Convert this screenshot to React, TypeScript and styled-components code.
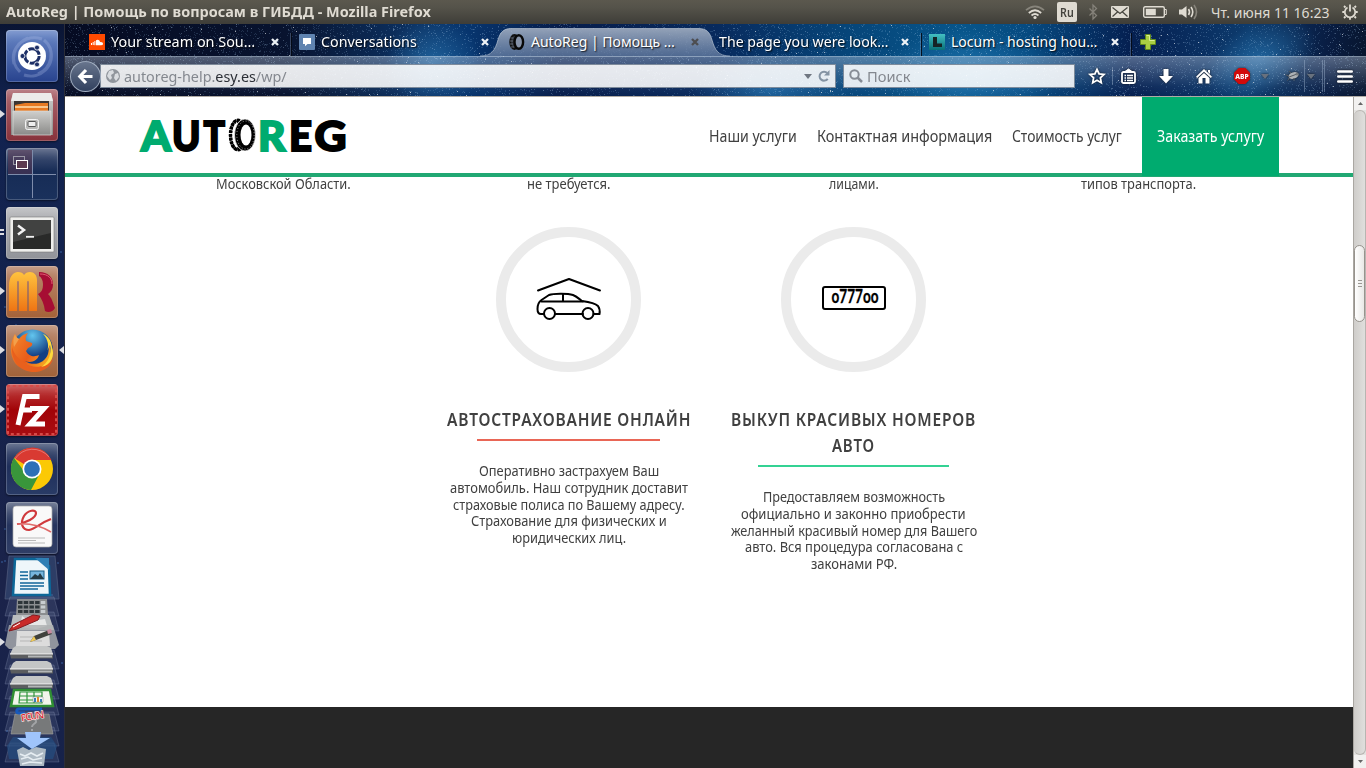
import React, { useLayoutEffect, useRef, useState } from 'react';
import styled, { createGlobalStyle } from 'styled-components';

const GlobalStyle = createGlobalStyle`
  *, *::before, *::after { box-sizing: border-box; }
  body { margin: 0; overflow: hidden; }
  svg { display: block; flex: none; overflow: visible; }
`;

const uiFont = '"Noto Sans", "Open Sans", sans-serif';

/* ---------- text fitted to a given width ---------- */

const FitBox = styled.span<{ $w: number }>`
  display: inline-block;
  flex: none;
  width: ${p => p.$w}px;
  white-space: nowrap;
  vertical-align: top;
  text-align: left;
`;
const FitInner = styled.span`
  display: inline-block;
  white-space: pre;
  transform-origin: 0 50%;
`;

function Fit({ w, children }: { w: number; children: React.ReactNode }) {
  const ref = useRef<HTMLSpanElement>(null);
  const [scale, setScale] = useState(1);
  useLayoutEffect(() => {
    if (ref.current) setScale(w / ref.current.offsetWidth);
  }, [w]);
  return (
    <FitBox $w={w}>
      <FitInner ref={ref} style={{ transform: `scaleX(${scale})` }}>{children}</FitInner>
    </FitBox>
  );
}

/* ---------- desktop frame ---------- */

const Desktop = styled.div`
  display: flex;
  flex-direction: column;
  width: 1366px;
  height: 768px;
  overflow: hidden;
  font-family: ${uiFont};
  background: #101d42;
`;
const TopPanel = styled.header`
  display: flex;
  align-items: center;
  height: 24px;
  flex: none;
  padding: 0 8px 0 6px;
  color: #dfdbd2;
  background: linear-gradient(#5b584e 0, #55534a 30%, #3e3d38 100%);
`;
const PanelTitle = styled.div`
  font-size: 14px;
  font-weight: 700;
  line-height: 24px;
  flex: 1;
`;
const Indicator = styled.div<{ $gap: number }>`
  margin-left: ${p => p.$gap}px;
  font-size: 14px;
  line-height: 23px;
`;
const LangBadge = styled.div`
  width: 20px;
  height: 20px;
  border-radius: 2px;
  background: #dfdbd2;
  color: #45443e;
  font-size: 13px;
  font-weight: 600;
  line-height: 21px;
  padding-left: 3px;
`;
const Body = styled.div`
  display: flex;
  flex: 1;
  min-height: 0;
`;

/* ---------- launcher ---------- */

const LauncherBar = styled.nav`
  position: relative;
  width: 65px;
  flex: none;
  padding-top: 6px;
  border-right: 1px solid #2b2d38;
  background: linear-gradient(#0a1534 0, #122350 12%, #14224c 45%, #1b234a 75%, #16224a 100%);
`;
const LauncherSlot = styled.div`
  position: relative;
  height: 52px;
  margin: 0 0 7px 6px;
`;
const Tile = styled.div<{ $bg: string }>`
  width: 52px;
  height: 52px;
  border-radius: 4px;
  background: ${p => p.$bg};
  box-shadow: inset 0 0 0 1px rgba(255, 255, 255, 0.2), inset 0 10px 10px -6px rgba(255, 255, 255, 0.22), 0 1px 2px rgba(0, 0, 0, 0.5);
`;
const Pip = styled.i<{ $top: number; $right?: boolean }>`
  position: absolute;
  top: ${p => p.$top}px;
  ${p => (p.$right ? 'right: 0;' : 'left: -6px;')}
  border: solid transparent;
  border-width: 4px 5px;
  ${p => (p.$right ? 'border-left: 0; border-right-color: #dcdde2;' : 'border-right: 0; border-left-color: #dcdde2;')}
`;
const SmallPip = styled.i<{ $top: number }>`
  position: absolute;
  top: ${p => p.$top}px;
  left: -6px;
  width: 4px;
  height: 2px;
  background: #dcdde2;
`;
const FoldedStack = styled.div`
  position: relative;
  margin-top: -7px;
  height: 213px;
`;
const StarLayer = styled.svg`
  position: absolute;
  left: 0;
  top: 0;
`;

/* ---------- browser ---------- */

const Browser = styled.div`
  display: flex;
  flex-direction: column;
  flex: 1;
  min-width: 0;
`;
const Chrome = styled.div`
  position: relative;
  height: 73px;
  flex: none;
  overflow: hidden;
  border-bottom: 1px solid #b0aba4;
  background: linear-gradient(90deg, #050b22 0, #08132f 17%, #0c3263 27%, #07356e 31%, #071d4b 38%, #082a5d 50%, #064579 60%, #07558a 69%, #064a80 74%, #051f50 82%, #0d3b6d 91%, #091d43 97%, #08162f 100%);
`;
const TabStrip = styled.div`
  position: relative;
  display: flex;
  height: 32px;
  padding-left: 15px;
`;
const TabItem = styled.div<{ $sep?: boolean }>`
  position: relative;
  display: flex;
  align-items: center;
  width: 210px;
  height: 32px;
  padding: 4px 0 0 9px;
  gap: 6px;
  font-size: 14px;
  line-height: 24px;
  color: #fff;
  text-shadow: 1px 1px 1.5px rgba(0, 0, 0, 0.9);
  ${p => p.$sep && `
    &::after {
      content: '';
      position: absolute;
      right: -2px;
      top: 9px;
      width: 2px;
      height: 23px;
      background: linear-gradient(90deg, rgba(140, 160, 190, 0.35) 50%, rgba(4, 8, 18, 0.9) 50%);
    }
  `}
`;
const TabIcon = styled.div`
  position: relative;
`;
const TabLabel = styled.div`
  position: relative;
  flex: 1;
`;
const CloseSlot = styled.div`
  position: relative;
  margin-right: 11px;
`;
const ActiveShape = styled.svg`
  position: absolute;
  left: -20px;
  top: 4px;
`;
const NewTab = styled.div`
  padding: 10px 0 0 10px;
`;
const NavBar = styled.div`
  position: relative;
  display: flex;
  align-items: center;
  height: 40px;
  padding: 0 0 1px 5px;
  border-top: 1px solid rgba(205, 220, 235, 0.6);
  background: linear-gradient(rgba(190, 205, 225, 0.42), rgba(150, 170, 200, 0.08) 75%, rgba(120, 140, 170, 0));
`;
const BackButton = styled.div`
  position: relative;
  z-index: 1;
  display: grid;
  place-items: center;
  width: 31px;
  height: 31px;
  margin-right: -1px;
  border-radius: 50%;
  border: 1px solid rgba(185, 197, 214, 0.75);
  background: linear-gradient(#68758d, #31405e);
`;
const Field = styled.div<{ $w: number; $ml: number }>`
  display: flex;
  align-items: center;
  width: ${p => p.$w}px;
  height: 24px;
  margin-left: ${p => p.$ml}px;
  padding: 0 5px;
  border: 1px solid rgba(90, 105, 125, 0.75);
  background: rgba(255, 255, 255, 0.88);
  font-size: 14px;
  line-height: 22px;
  color: #84888f;
`;
const FieldText = styled.div`
  margin: 1px 0 0 4px;
`;
const Dark = styled.span`
  color: #2c3037;
`;
const FieldEnd = styled.div`
  display: flex;
  align-items: center;
  gap: 6px;
  margin-left: auto;
`;
const Tool = styled.div<{ $ml: number }>`
  margin-left: ${p => p.$ml}px;
  filter: drop-shadow(0 0 1px rgba(0, 0, 0, 0.7));
`;
const Divider = styled.div<{ $ml: number; $h: number }>`
  width: 1px;
  height: ${p => p.$h}px;
  margin-left: ${p => p.$ml}px;
  background: rgba(170, 190, 215, 0.4);
`;

/* ---------- page ---------- */

const Viewport = styled.div`
  display: flex;
  flex: 1;
  min-height: 0;
  background: #fff;
`;
const Page = styled.div`
  display: flex;
  flex-direction: column;
  width: 1288px;
`;
const SiteHeader = styled.header`
  display: flex;
  align-items: center;
  height: 80px;
  padding: 0 74px 0 75px;
  border-bottom: 4px solid #21a873;
  font-size: 15.6px;
  line-height: 26px;
  color: #404040;
`;
const SiteNav = styled.nav`
  display: flex;
  align-items: center;
  gap: 20px;
  height: 76px;
  margin-left: auto;
  padding-top: 2px;
`;
const OrderButton = styled.div`
  display: flex;
  align-items: center;
  height: 79px;
  margin: -2px 0 -3px;
  padding: 0 15px 1px;
  background: #00ab6f;
  color: #fff;
`;
const Main = styled.main`
  height: 530px;
  font-size: 13.8px;
  line-height: 16.8px;
  color: #404040;
`;
const UpperRow = styled.div`
  display: grid;
  grid-template-columns: repeat(4, 285px);
  height: 51px;
  padding-left: 76px;
  margin-top: -1px;
  text-align: center;
`;
const ServiceRow = styled.section`
  display: flex;
  padding-left: 361px;
`;
const Service = styled.article`
  display: flex;
  flex-direction: column;
  align-items: center;
  width: 285px;
`;
const Ring = styled.div<{ $lift: number }>`
  display: grid;
  place-items: center;
  width: 145px;
  height: 145px;
  padding-bottom: ${p => p.$lift}px;
  border: 10px solid #ebebeb;
  border-radius: 50%;
`;
const ServiceTitle = styled.h3`
  display: flex;
  flex-direction: column;
  align-items: center;
  margin: 34px 0 0;
  font-size: 17.4px;
  font-weight: 600;
  letter-spacing: 0.9px;
  line-height: 26px;
`;
const Rule = styled.div<{ $w: number; $color: string }>`
  width: ${p => p.$w}px;
  height: 2px;
  margin: 7px 0 22px;
  background: ${p => p.$color};
`;
const Line = styled.div`
  height: 16.8px;
`;
const SiteFooter = styled.footer`
  flex: 1;
  background: #262626;
`;

const Scrollbar = styled.div`
  display: flex;
  flex-direction: column;
  width: 13px;
  background: #e4e3e1;
  border-left: 1px solid #aaa7a2;
`;
const ScrollButton = styled.div`
  display: grid;
  place-items: center;
  height: 13px;
  background: #f2f1f0;
`;
const Track = styled.div`
  flex: 1;
  padding-top: 134px;
  border: 1px solid #b8b5b1;
  border-left: 0;
  border-radius: 6px;
  background: linear-gradient(90deg, #cfcdca, #e0dfdd);
`;
const Thumb = styled.div`
  display: flex;
  flex-direction: column;
  align-items: center;
  justify-content: center;
  gap: 2px;
  height: 77px;
  border: 1px solid #97938d;
  border-radius: 6px;
  background: linear-gradient(90deg, #fff, #e9e8e6);
`;
const Grip = styled.i`
  width: 4px;
  height: 1px;
  background: #9b9893;
`;

/* ---------- star field ---------- */

function makeStars(count: number, w: number, h: number, seed: number, size = 1) {
  let s = seed;
  const next = () => {
    s = (s + 0x6d2b79f5) | 0;
    let t = Math.imul(s ^ (s >>> 15), 1 | s);
    t = (t + Math.imul(t ^ (t >>> 7), 61 | t)) ^ t;
    return ((t ^ (t >>> 14)) >>> 0) / 4294967296;
  };
  let d = '';
  for (let i = 0; i < count; i++) {
    d += `M${Math.floor(next() * w)} ${Math.floor(next() * h)}h${size}v${size}h-${size}z`;
  }
  return d;
}
const faintStars = makeStars(7500, 1301, 73, 7);
const midStars = makeStars(1700, 1301, 73, 41);
const brightStars = makeStars(200, 1301, 73, 93);
const launcherStars = makeStars(26, 64, 744, 15, 2);

const ChromeStars = () => (
  <StarLayer width="1301" height="73">
    <defs>
      <radialGradient id="glow">
        <stop offset="0" stopColor="#2f86c4" stopOpacity="0.55" />
        <stop offset="1" stopColor="#2f86c4" stopOpacity="0" />
      </radialGradient>
    </defs>
    <ellipse cx="368" cy="38" rx="48" ry="45" fill="url(#glow)" />
    <ellipse cx="705" cy="66" rx="80" ry="35" fill="url(#glow)" />
    <ellipse cx="905" cy="50" rx="90" ry="45" fill="url(#glow)" />
    <ellipse cx="1195" cy="35" rx="60" ry="35" fill="url(#glow)" transform="rotate(-25 1195 35)" />
    <path d={faintStars} fill="#8fb8e0" opacity="0.19" />
    <path d={midStars} fill="#b8d4ef" opacity="0.3" />
    <path d={brightStars} fill="#fff" opacity="0.6" />
  </StarLayer>
);

/* ---------- small icons ---------- */

const Cross = ({ dark }: { dark?: boolean }) => (
  <svg width="8" height="8" viewBox="0 0 8 8">
    <path d="M1 1l6 6M7 1l-6 6" stroke={dark ? '#4d4d50' : '#eef2f6'} strokeWidth="2.3" />
  </svg>
);
const SoundCloud = () => (
  <svg width="16" height="16" viewBox="0 0 16 16">
    <rect width="16" height="16" fill="#ff4a00" />
    <path d="M2.500 9v2M4.200 8v3M5.900 7v4.200" stroke="#fff" strokeWidth="1" />
    <path d="M7 11.200V6.200c2-1.400 4 0 4 2 1.600-.5 3 .4 3 1.600s-1 1.400-1.600 1.400z" fill="#fff" />
  </svg>
);
const ChatIcon = () => (
  <svg width="16" height="16" viewBox="0 0 16 16">
    <rect width="16" height="16" rx="1" fill="#5f83b0" />
    <path d="M4 4h8v6H8.500L6 12.300V10H4z" fill="#fff" />
  </svg>
);
const TireIcon = () => (
  <svg width="16" height="16" viewBox="0 0 16 16">
    <ellipse cx="5.500" cy="8" rx="4.300" ry="7" fill="#30343b" stroke="#111" strokeWidth="1.800" />
    <path d="M1.500 4h3M1 7h3M1 10h3M2 13h3" stroke="#8a94a6" strokeWidth=".6" />
    <ellipse cx="9.800" cy="8" rx="4.300" ry="6.800" fill="#8693a9" stroke="#080808" strokeWidth="2.400" />
  </svg>
);
const LocumIcon = () => (
  <svg width="16" height="16" viewBox="0 0 16 16">
    <defs>
      <linearGradient id="locum" x2="0" y2="1"><stop stopColor="#43bfc2" /><stop offset="1" stopColor="#087078" /></linearGradient>
    </defs>
    <rect width="16" height="16" fill="url(#locum)" />
    <path d="M4 3h4v6.500h5v3.500H4z" fill="#152326" />
  </svg>
);
const PlusIcon = () => (
  <svg width="16" height="16" viewBox="0 0 16 16">
    <path d="M5.500.5h5v5h5v5h-5v5h-5v-5h-5v-5h5z" fill="#a9cf43" stroke="#628b1d" />
    <path d="M6.500 1.500h3v5h5" fill="none" stroke="#d8ee8f" />
  </svg>
);

/* ---------- launcher drawings ---------- */

const DashIcon = () => (
  <svg width="52" height="52" viewBox="0 0 52 52">
    <g fill="none" stroke="#b6c7ee" opacity="0.28" strokeWidth="3">
      <path d="M8 34C4 16 20 4 36 9M44 18c6 18-10 32-26 27M14 42C2 30 8 14 22 8M38 10c12 10 8 28-6 34" />
    </g>
    <circle cx="26" cy="26" r="14" fill="#fff" />
    <circle cx="26" cy="26" r="7.200" fill="none" stroke="#1d2f66" strokeWidth="3" strokeDasharray="13.500 1.580" />
    <g fill="#1d2f66" stroke="#fff" strokeWidth="0.8">
      <circle cx="16.500" cy="26" r="2.500" /><circle cx="31" cy="17.600" r="2.500" /><circle cx="31" cy="34.400" r="2.500" />
    </g>
  </svg>
);
const FilesIcon = () => (
  <svg width="52" height="52" viewBox="0 0 52 52">
    <defs><linearGradient id="cab" x2="0" y2="1"><stop stopColor="#cfcfcd" /><stop offset="1" stopColor="#8a8a88" /></linearGradient></defs>
    <path d="M7 4h38l2 8v34H5V12z" fill="url(#cab)" />
    <path d="M7 4h38l2 8H5z" fill="#ececeb" />
    <rect x="8" y="12" width="35" height="10" fill="#3b3532" />
    <path d="M9 16l10-2h23v8H9z" fill="#e77a23" />
    <path d="M9 18h33" stroke="#ffe1b0" strokeWidth="1.500" />
    <path d="M7 22h38v24H7z" fill="url(#cab)" stroke="#dcdcda" strokeWidth=".7" />
    <rect x="19.500" y="30.500" width="13" height="10" rx="2" fill="#b9b9b7" stroke="#f3f3f3" />
    <rect x="22" y="32.500" width="8" height="5" rx="1" fill="#eee" stroke="#555" />
  </svg>
);
const WorkspacesIcon = () => (
  <svg width="52" height="52" viewBox="0 0 52 52">
    <rect x="2" y="2" width="24" height="24" fill="#5c3550" opacity=".5" />
    <path d="M26.500 2v48M2 26.500h48" stroke="#7e8cab" />
    <rect x="7.500" y="8.500" width="11" height="8" fill="none" stroke="#9b98a6" />
    <rect x="10.500" y="12.500" width="11" height="8" fill="#5c3a50" stroke="#fff" />
  </svg>
);
const TerminalIcon = () => (
  <svg width="52" height="52" viewBox="0 0 52 52">
    <rect x="4" y="10" width="44" height="35" rx="1" fill="#efefed" stroke="#777" strokeWidth=".6" />
    <rect x="7" y="13" width="38" height="29" fill="#292a29" />
    <path d="M7 13h38v13L7 35z" fill="#555" opacity=".55" />
    <path d="M12 18.500l6 4.500-6 4.500" fill="none" stroke="#f2f2f2" strokeWidth="2.500" />
    <path d="M20 29.800h8" stroke="#f2f2f2" strokeWidth="1.800" />
  </svg>
);
const MineIcon = () => (
  <svg width="52" height="52" viewBox="0 0 52 52">
    <defs><linearGradient id="orange" x2="0" y2="1"><stop stopColor="#ffc33e" /><stop offset="1" stopColor="#ee7414" /></linearGradient></defs>
    <path d="M3 45V20C3 11 7 6 12 6c3 0 5 1 6 3C19.500 7 21 6 24 6c4 0 7 3 7 8v31h-8V17c0-3-2-3-2 0v28h-8V17c0-3-2-3-2 0v28z" fill="url(#orange)" />
    <path d="M33 6c9 0 14 5 14 12 0 5-2 8-5 10 4 4 5 9 7 14-2 4-7 5-10 3-1-7-3-12-7-17 4-2 5-5 5-10 0-4-2-7-4-8z" fill="#a60d33" />
    <path d="M34 8c8 0 12 4 12 10" fill="none" stroke="#df5870" strokeWidth="1" />
  </svg>
);
const FirefoxIcon = () => (
  <svg width="52" height="52" viewBox="0 0 52 52">
    <defs>
      <radialGradient id="globe" cx=".5" cy=".15"><stop stopColor="#62c5ee" /><stop offset="1" stopColor="#123f84" /></radialGradient>
      <linearGradient id="fox" x1="0" x2="1" y1="0" y2=".6"><stop stopColor="#f48a2c" /><stop offset=".6" stopColor="#e85c1a" /><stop offset="1" stopColor="#f7a51f" /></linearGradient>
    </defs>
    <circle cx="26.500" cy="25" r="20.500" fill="url(#globe)" />
    <path d="M9 9c1 3 2 4 4 5 2-3 5-5 9-6-2 3-3 5-2 8l6 2c1 2-1 4-4 5l-2 3c3 6 9 6 13 4-2 7-9 8-14 6 9 6 20 2 23-7 1-4 1-8 0-12 4 8 3 18-3 23-9 8-23 7-30-2C3 29 4 17 9 9z" fill="url(#fox)" />
    <path d="M6 22c-1 15 10 26 24 25 9-1 15-6 17-13-8 9-20 10-28 4C13 34 8 30 6 22z" fill="#e8601d" />
    <path d="M37 9c5 5 7 13 3 19l4-8c2 9-2 18-9 22 11-2 14-12 11-20C45 15 42 11 37 9z" fill="#ffd93c" />
    <path d="M9 9c1 3 2 4 4 5l-5 8c-1-4-1-9 1-13z" fill="#f3a04a" />
  </svg>
);
const FileZillaIcon = () => (
  <svg width="52" height="52" viewBox="0 0 52 52">
    <rect x="2" y="2" width="48" height="48" fill="none" stroke="#d64a48" strokeWidth="2" strokeDasharray="3 2.800" strokeDashoffset="1" />
    <path d="M12 41l6.500-28.500h15M15 26h11M24 24.500h14L24 40h15" fill="none" stroke="#fff" strokeWidth="5" />
  </svg>
);
const ChromeIcon = () => (
  <svg width="52" height="52" viewBox="0 0 52 52">
    <circle cx="26" cy="26" r="21" fill="#fbc905" />
    <path d="M26 26L8 15A21 21 0 0 1 45.500 17H26z" fill="#d93a32" />
    <path d="M8 15A21 21 0 0 0 25 47l9-17-8-4-8 2z" fill="#39963b" />
    <circle cx="26" cy="26" r="9.500" fill="#fff" />
    <circle cx="26" cy="26" r="7.800" fill="#2d70b7" />
    <path d="M9 16A21 21 0 0 1 43 14" fill="none" stroke="#fff" opacity=".3" />
  </svg>
);
const DocumentIcon = () => (
  <svg width="52" height="52" viewBox="0 0 52 52">
    <rect x="7" y="4" width="39" height="41" rx="3" fill="#f9f9f9" stroke="#aaa" strokeWidth=".7" />
    <path d="M12 36h27M12 38.500h18M12 41h27" stroke="#aaa" strokeWidth=".8" />
    <path d="M11 22c9-1 19-6 19-11 0-4-8-3-12 3-4 7-2 14 5 14 7-1 11-7 22-11" fill="none" stroke="#d0393c" strokeWidth="2.200" />
    <path d="M11 22c12-1 24 2 34 8" fill="none" stroke="#df6a69" strokeWidth="1.600" />
  </svg>
);

const Plate = ({ y, h }: { y: number; h: number }) => (
  <path d={`M10 ${y}h44l5 ${h}H5z`} fill="rgba(140,155,185,0.16)" stroke="rgba(190,205,230,0.28)" strokeWidth=".7" />
);
const FoldedIcons = () => (
  <svg width="64" height="213" viewBox="0 0 64 213">
    <path d="M9 2h46l4 43H5z" fill="#506f9a" opacity=".35" stroke="#b7c5dc" strokeWidth=".7" />
    <path d="M15 5h27l7 7 1 29H13z" fill="#eef6fa" stroke="#0c6798" strokeWidth="2.500" />
    <path d="M35 4h14v12z" fill="#2f7fb5" />
    <path d="M20 18h8M20 21.500h8M20 25h8M20 29h24M20 32h24M20 35h18" stroke="#12669a" strokeWidth="1.300" />
    <rect x="30" y="17" width="14" height="8" fill="#77b6dd" stroke="#175b84" />
    <path d="M30 25l5-5 3 2 2-3 4 6z" fill="#253b45" />
    {[43, 58, 96, 111, 126, 142, 158, 173, 189].map(y => <Plate key={y} y={y} h={19} />)}
    <path d="M17 45h30l1 16H16z" fill="#8b8e90" />
    {[0, 1, 2].map(r => [0, 1, 2, 3, 4].map(c => (
      <rect key={`${r}${c}`} x={18 + c * 5.700} y={47 + r * 4.500} width="4.500" height="3" fill={c === 4 ? '#c8cdd0' : '#2d3539'} />
    )))}
    <path d="M13 61h36l5 15H10z" fill="#b9bdbf" />
    <path d="M22 62l6 4 5-4 5 4 7-1 2 7-11 3-16-2z" fill="#e6e7e7" />
    <path d="M9 71h44l6 20-4 4H9l-4-4z" fill="#aeb0b2" opacity=".8" />
    <path d="M17 77h32l1 15H16z" fill="#dcdcdc" />
    <path d="M9 77l4-6 20-10 7 1-2 4-21 9z" fill="#c92b29" stroke="#831a20" />
    <path d="M13 73l7-4" stroke="#fff" />
    <path d="M20 83h22M20 87h22" stroke="#b5b5b5" />
    <path d="M30 88l4-6 15-6 3 4-16 6z" fill="#40413d" />
    <path d="M30 88l4-6 2 4z" fill="#f1cb58" /><path d="M47 76l4-1 1 4-4 1z" fill="#c68ba0" />
    <path d="M0 84l5 4-5 4z" fill="#dcdde2" />
    {[97, 112, 127].map(y => (
      <g key={y}>
        <path d={`M13 ${y - 3}l3-2h31l4 2 2 6H10z`} fill="#c4c6c6" />
        <path d={`M10 ${y + 3}h43v4.500H11z`} fill="#5b5d5f" /><path d={`M10 ${y + 3}h43`} stroke="#f4f4f4" />
        <path d={`M28 ${y + 5.500}h24`} stroke="#b3b6b7" strokeWidth="2" />
      </g>
    ))}
    <path d="M14 136h36l3 16H11z" fill="#f1f5eb" stroke="#2f8e33" strokeWidth="2.500" />
    <path d="M20 138h22v11H19zM20 142h22M19 146h23M27 138v11M34 138v11" fill="none" stroke="#2d963a" strokeWidth="1.200" />
    <path d="M33 143h10v5H33z" fill="#f7fafb" stroke="#888" strokeWidth=".5" />
    <path d="M35 144v4" stroke="#387db7" strokeWidth="2" /><path d="M38 143v5" stroke="#e08b2c" strokeWidth="2" /><path d="M41 145v3" stroke="#387db7" strokeWidth="2" />
    <path d="M15 160h34l4 20H11z" fill="#77797a" stroke="#a1a1a1" strokeWidth=".6" />
    <path d="M28 168c1-4 9-4 8 0-1 2-4 2-4 5M32 175v2" fill="none" stroke="#a2a4a6" strokeWidth="2" />
    <path d="M42 155H19c-3 0-3 4 0 4h6" fill="none" stroke="#1759bb" strokeWidth="3" />
    <text x="20" y="166" textLength="24" fontSize="10.500" fontWeight="800" fill="#d51f28" stroke="#fff" strokeWidth=".5" transform="rotate(-10 31 160)">PCUN</text>
    <path d="M7 192l6-9h38l6 9-4 13H9z" fill="#234d80" opacity=".7" />
    <path d="M17 196l6-3 6 3 7-3 10 2-2 17H20z" fill="#adb9c3" />
    <path d="M20 200l5 2 6-3 6 3 6-3M21 205l7-2 5 3 9-2M22 210l8-2 12 1" fill="none" stroke="#e6edf2" strokeWidth="1.600" />
    <path d="M25 178h16l-1 6h10L32 195 17 184h9z" fill="#9fc4fa" />
  </svg>
);

const launcherItems: { bg: string; icon: React.ReactNode; running?: number; focused?: boolean }[] = [
  { bg: 'linear-gradient(#6a88c7, #28438e)', icon: <DashIcon /> },
  { bg: 'linear-gradient(#ad6870, #87323b)', icon: <FilesIcon />, running: 1 },
  { bg: 'linear-gradient(#4c5a7c, #172c56 45%, #1a315c)', icon: <WorkspacesIcon /> },
  { bg: 'linear-gradient(#b9babd, #919399)', icon: <TerminalIcon />, running: 2 },
  { bg: 'linear-gradient(#ba8a70, #a56238)', icon: <MineIcon />, running: 1 },
  { bg: 'linear-gradient(#ba8a70, #a06239)', icon: <FirefoxIcon />, running: 1, focused: true },
  { bg: 'linear-gradient(#c34746, #a10307 50%, #a80d12)', icon: <FileZillaIcon />, running: 1 },
  { bg: 'linear-gradient(#4c5a7c, #1f2f5b 45%, #293b66)', icon: <ChromeIcon /> },
  { bg: 'linear-gradient(#5a6683, #25345e 45%, #303e66)', icon: <DocumentIcon /> },
];

const Launcher = () => (
  <LauncherBar>
    <StarLayer width="64" height="744"><path d={launcherStars} fill="#3f6eb3" opacity=".4" /></StarLayer>
    {launcherItems.map((item, i) => (
      <LauncherSlot key={i}>
        <Tile $bg={item.bg}>{item.icon}</Tile>
        {item.running === 1 && <Pip $top={21} />}
        {item.running === 2 && <><SmallPip $top={22} /><SmallPip $top={26} /></>}
        {item.focused && <Pip $top={21} $right />}
      </LauncherSlot>
    ))}
    <FoldedStack><FoldedIcons /></FoldedStack>
  </LauncherBar>
);

/* ---------- top panel ---------- */

const Panel = () => (
  <TopPanel>
    <PanelTitle><Fit w={425}>AutoReg | Помощь по вопросам в ГИБДД - Mozilla Firefox</Fit></PanelTitle>
    <Indicator $gap={0}>
      <svg width="20" height="16" viewBox="0 0 20 16" fill="none" strokeWidth="1.700">
        <path d="M1 6.200Q10-1.500 19 6.200" stroke="#87847b" /><path d="M3.800 9Q10 3.500 16.200 9" stroke="#dfdbd2" /><path d="M6.500 11.500Q10 8.500 13.500 11.500" stroke="#dfdbd2" /><circle cx="10" cy="13.500" r="1.600" fill="#dfdbd2" />
      </svg>
    </Indicator>
    <Indicator $gap={12}><LangBadge><Fit w={14}>Ru</Fit></LangBadge></Indicator>
    <Indicator $gap={12}>
      <svg width="8" height="16" viewBox="0 0 8 16"><path d="M.5 4.500l7 7L4 15V1l3.500 3.500-7 7" fill="none" stroke="#85827a" strokeWidth="1.300" /></svg>
    </Indicator>
    <Indicator $gap={14}>
      <svg width="18" height="12" viewBox="0 0 18 12"><rect width="18" height="12" rx="1" fill="#dfdbd2" /><path d="M1.500 1.500L9 7.500l7.500-6M1.500 10.500L6.500 6M16.500 10.500L11.500 6" fill="none" stroke="#45443e" strokeWidth="1.200" /></svg>
    </Indicator>
    <Indicator $gap={14}>
      <svg width="24" height="12" viewBox="0 0 24 12"><rect x=".7" y=".7" width="20.600" height="10.600" rx="1.500" fill="none" stroke="#dfdbd2" strokeWidth="1.400" /><rect x="2.800" y="2.800" width="10" height="6.400" fill="#dfdbd2" /><path d="M22 3.500h1.300v5H22" fill="none" stroke="#dfdbd2" /></svg>
    </Indicator>
    <Indicator $gap={12}>
      <svg width="19" height="16" viewBox="0 0 19 16"><path d="M0 5.500h3L7.500 2v12L3 10.500H0z" fill="#dfdbd2" /><path d="M9.500 5q2 3 0 6M12 3q3.500 5 0 10" fill="none" stroke="#dfdbd2" strokeWidth="1.600" /><path d="M15 1q5 7 0 14" fill="none" stroke="#87847b" strokeWidth="1.600" /></svg>
    </Indicator>
    <Indicator $gap={13}><Fit w={118}>Чт. июня 11 16:23</Fit></Indicator>
    <Indicator $gap={13}>
      <svg width="16" height="16" viewBox="0 0 16 16" fill="none" stroke="#dfdbd2">
        <path d="M5.500 3.500a5.200 5.200 0 1 0 5 0" strokeWidth="1.700" /><path d="M8 .5v7" strokeWidth="1.800" />
        <path d="M3.500 3.500L2 2M12.500 3.500L14 2M2.500 8H.3M13.500 8h2.200M3.500 12.500L2 14M12.500 12.500L14 14M8 13.500v2.300" strokeWidth="1.800" />
      </svg>
    </Indicator>
  </TopPanel>
);

/* ---------- browser chrome ---------- */

const Caret = ({ color = '#6f7680' }: { color?: string }) => (
  <svg width="8" height="5" viewBox="0 0 8 5"><path d="M0 0h8L4 5z" fill={color} /></svg>
);

const BrowserChrome = () => (
  <Chrome>
    <ChromeStars />
    <TabStrip>
      <TabItem $sep><TabIcon><SoundCloud /></TabIcon><TabLabel><Fit w={144}>Your stream on Sou…</Fit></TabLabel><CloseSlot><Cross /></CloseSlot></TabItem>
      <TabItem><TabIcon><ChatIcon /></TabIcon><TabLabel><Fit w={96}>Conversations</Fit></TabLabel><CloseSlot><Cross /></CloseSlot></TabItem>
      <TabItem>
        <ActiveShape width="250" height="29" viewBox="0 0 250 29">
          <defs><linearGradient id="active" x2="0" y2="1"><stop stopColor="#9aa8bd" stopOpacity=".95" /><stop offset="1" stopColor="#60799f" stopOpacity=".8" /></linearGradient></defs>
          <path d="M0 28.500C12 28.500 15 22 18 12 20 4 24 .5 31 .5h188c7 0 11 3.500 13 11.500 3 10 6 16.500 18 16.500z" fill="url(#active)" />
          <path d="M0 28C12 28 15 22 18 12 20 4 24 .5 31 .5h188c7 0 11 3.500 13 11.500 3 10 6 16 18 16" fill="none" stroke="#c4cedb" strokeOpacity=".6" />
        </ActiveShape>
        <TabIcon><TireIcon /></TabIcon><TabLabel><Fit w={144}>AutoReg | Помощь …</Fit></TabLabel><CloseSlot><Cross dark /></CloseSlot>
      </TabItem>
      <TabItem $sep><TabLabel><Fit w={170}>The page you were look…</Fit></TabLabel><CloseSlot><Cross /></CloseSlot></TabItem>
      <TabItem $sep><TabIcon><LocumIcon /></TabIcon><TabLabel><Fit w={146}>Locum - hosting hou…</Fit></TabLabel><CloseSlot><Cross /></CloseSlot></TabItem>
      <NewTab><PlusIcon /></NewTab>
    </TabStrip>
    <NavBar>
      <BackButton>
        <svg width="15" height="15" viewBox="0 0 15 15"><path d="M8 1L1.800 7.500 8 14M2 7.500h12.500" fill="none" stroke="#fff" strokeWidth="3.200" /></svg>
      </BackButton>
      <Field $w={736} $ml={0}>
        <svg width="14" height="14" viewBox="0 0 14 14"><circle cx="7" cy="7" r="7" fill="#90959c" /><path d="M3 2l4-1 1 3-3 2 1 3-2 2-3-4zM9 5l3-1 1 4-3 4-2-3z" fill="#d9dce0" /></svg>
        <FieldText><Fit w={163}>autoreg-help.<Dark>esy.es</Dark>/wp/</Fit></FieldText>
        <FieldEnd>
          <Caret />
          <svg width="12" height="12" viewBox="0 0 12 12"><path d="M9.700 8.800A4.500 4.500 0 1 1 9.300 3" fill="none" stroke="#8493a3" strokeWidth="2" /><path d="M11.500 0v5.500H6z" fill="#8493a3" /></svg>
        </FieldEnd>
      </Field>
      <Field $w={232} $ml={7}>
        <svg width="14" height="14" viewBox="0 0 14 14"><circle cx="5.500" cy="5.500" r="4.200" fill="none" stroke="#868c95" strokeWidth="2" /><path d="M8.500 8.500l4.500 4.500" stroke="#868c95" strokeWidth="2.500" /></svg>
        <FieldText><Fit w={44}>Поиск</Fit></FieldText>
      </Field>
      <Tool $ml={14}><svg width="16" height="16" viewBox="0 0 16 16"><path d="M8 1.300l2.100 4.500 4.900.6-3.600 3.400.9 4.900L8 12.300l-4.300 2.400.9-4.900L1 6.400l4.900-.6z" fill="none" stroke="#fff" strokeWidth="1.800" /></svg></Tool>
      <Divider $ml={7} $h={18} />
      <Tool $ml={8}><svg width="15" height="15" viewBox="0 0 15 15"><rect x="1" y="3" width="13" height="11" rx="1.500" fill="none" stroke="#fff" strokeWidth="1.800" /><path d="M4 2.500L7.500 0 11 2.500z" fill="#fff" stroke="#fff" /><path d="M3.500 6.500h1.500M6 6.500h6M3.500 9h1.500M6 9h6M3.500 11.500h1.500M6 11.500h6" stroke="#fff" strokeWidth="1.400" /></svg></Tool>
      <Tool $ml={23}><svg width="14" height="15" viewBox="0 0 14 15"><path d="M4.500 0h5v7H14l-7 7.500L0 7h4.500z" fill="#fff" /></svg></Tool>
      <Tool $ml={23}><svg width="16" height="15" viewBox="0 0 16 15"><path d="M8 0l8 7.800-1.200 1.200L8 2.800 1.200 9 0 7.800z" fill="#fff" /><path d="M12 1h2v4l-2-2z" fill="#fff" /><path d="M2.500 9L8 4l5.500 5v5.500h-4V9h-3v5.500h-4z" fill="#fff" /></svg></Tool>
      <Tool $ml={22}>
        <svg width="16" height="16" viewBox="0 0 16 16"><path d="M4.700 0h6.600L16 4.700v6.600L11.300 16H4.700L0 11.300V4.700z" fill="#d20a0a" /><text x="1.300" y="11" textLength="13.400" lengthAdjust="spacingAndGlyphs" fontSize="7.500" fontWeight="800" fill="#fff">ABP</text></svg>
      </Tool>
      <Tool $ml={11}><Caret color="#68717e" /></Tool>
      <Tool $ml={17}>
        <svg width="13" height="10" viewBox="0 0 13 10"><ellipse cx="7.500" cy="4.500" rx="5.200" ry="3.200" fill="#aeb2b6" transform="rotate(-18 7.500 4.500)" /><path d="M3 5L0 4M4 7L1.500 9.500M8 7L8 9.500M5 2L3 0M3 6l8-3" fill="none" stroke="#52585f" /><circle cx="11" cy="3" r="1.500" fill="#73777c" /></svg>
      </Tool>
      <Divider $ml={5} $h={32} />
      <Tool $ml={2}><Caret color="#68717e" /></Tool>
      <Divider $ml={7} $h={32} />
      <Divider $ml={1} $h={32} />
      <Tool $ml={12}><svg width="16" height="13" viewBox="0 0 16 13"><path d="M1.300 1.500h13.400M1.300 6.500h13.400M1.300 11.500h13.400" stroke="#fff" strokeWidth="2.600" strokeLinecap="round" /></svg></Tool>
    </NavBar>
  </Chrome>
);

/* ---------- site ---------- */

const Logo = () => (
  <svg width="206" height="36" viewBox="0 0 206 36" fontFamily="Lato, sans-serif" fontWeight="900" fontSize="42.500" strokeWidth="2">
    <g fill="#00ab6f" stroke="#00ab6f">
      <text x="1" y="33.500" textLength="30" lengthAdjust="spacingAndGlyphs">A</text>
      <text x="118" y="33.500" textLength="27.500" lengthAdjust="spacingAndGlyphs">R</text>
    </g>
    <g fill="#000" stroke="#000">
      <text x="32" y="33.500" textLength="28.500" lengthAdjust="spacingAndGlyphs">U</text>
      <text x="63.500" y="33.500" textLength="21.500" lengthAdjust="spacingAndGlyphs">T</text>
      <text x="149" y="33.500" textLength="23" lengthAdjust="spacingAndGlyphs">E</text>
      <text x="174.500" y="33.500" textLength="32" lengthAdjust="spacingAndGlyphs">G</text>
    </g>
    <ellipse cx="98" cy="18" rx="7.500" ry="15" fill="none" stroke="#000" strokeWidth="3" strokeDasharray="3 .8" />
    <ellipse cx="97" cy="18" rx="6.500" ry="14" fill="none" stroke="#000" strokeWidth="3.500" strokeDasharray="2.300 1.200" />
    <ellipse cx="105" cy="18" rx="10.500" ry="16" fill="#000" stroke="#fff" strokeWidth=".7" />
    <ellipse cx="105.500" cy="18" rx="8.700" ry="14" fill="none" stroke="#fff" strokeWidth=".6" strokeDasharray="1 2" />
    <ellipse cx="106" cy="18" rx="5.500" ry="10.500" fill="#fff" />
  </svg>
);

const CarIcon = () => (
  <svg width="66" height="44" viewBox="0 0 66 44" fill="none" stroke="#000" strokeWidth="2" strokeLinejoin="round" strokeLinecap="round">
    <path d="M2 13.500L33 2l31 11.500" />
    <path d="M8 37H5c-2.500 0-3.500-2-3.500-5 0-4 1-7 4-9l7.500-5c4-1.500 18-2 24 0 4 1.500 6 4 9 6 7 1 13 2 16 5 1.500 2 2 5 1.500 8h-6M19 37h28" />
    <path d="M5.500 24.500H47M27 17v7" />
    <circle cx="13.500" cy="36.500" r="5.500" /><circle cx="52" cy="36.500" r="5.500" />
  </svg>
);
const NumberIcon = () => (
  <svg width="64" height="24" viewBox="0 0 64 24">
    <rect x="1" y="1" width="62" height="22" rx="2" fill="none" stroke="#000" strokeWidth="2" />
    <text x="9.500" y="17" textLength="47" lengthAdjust="spacingAndGlyphs" fontFamily="Lato, sans-serif" fontWeight="700" fontSize="18.500" fill="#000" stroke="#000" strokeWidth=".3">о777оо</text>
  </svg>
);

const upperLines: [string, number][] = [
  ['Московской Области.', 135],
  ['не требуется.', 84],
  ['лицами.', 50],
  ['типов транспорта.', 115],
];
const services: { icon: React.ReactNode; lift: number; title: [string, number][]; rule: [number, string]; text: [string, number][] }[] = [
  {
    icon: <CarIcon />,
    lift: 1,
    title: [['АВТОСТРАХОВАНИЕ ОНЛАЙН', 244]],
    rule: [183, '#e96656'],
    text: [
      ['Оперативно застрахуем Ваш', 180],
      ['автомобиль. Наш сотрудник доставит', 238],
      ['страховые полиса по Вашему адресу.', 232],
      ['Страхование для физических и', 196],
      ['юридических лиц.', 114],
    ],
  },
  {
    icon: <NumberIcon />,
    lift: 3,
    title: [['ВЫКУП КРАСИВЫХ НОМЕРОВ', 245], ['АВТО', 43]],
    rule: [191, '#34d293'],
    text: [
      ['Предоставляем возможность', 182],
      ['официально и законно приобрести', 225],
      ['желанный красивый номер для Вашего', 246],
      ['авто. Вся процедура согласована с', 218],
      ['законами РФ.', 86],
    ],
  },
];

const Site = () => (
  <Page>
    <SiteHeader>
      <Logo />
      <SiteNav>
        <Fit w={88}>Наши услуги</Fit>
        <Fit w={175}>Контактная информация</Fit>
        <Fit w={110}>Стоимость услуг</Fit>
        <OrderButton><Fit w={107}>Заказать услугу</Fit></OrderButton>
      </SiteNav>
    </SiteHeader>
    <Main>
      <UpperRow>
        {upperLines.map(([t, w]) => <div key={t}><Fit w={w}>{t}</Fit></div>)}
      </UpperRow>
      <ServiceRow>
        {services.map(s => (
          <Service key={s.title[0][0]}>
            <Ring $lift={s.lift}>{s.icon}</Ring>
            <ServiceTitle>{s.title.map(([t, w]) => <Fit key={t} w={w}>{t}</Fit>)}</ServiceTitle>
            <Rule $w={s.rule[0]} $color={s.rule[1]} />
            {s.text.map(([t, w]) => <Line key={t}><Fit w={w}>{t}</Fit></Line>)}
          </Service>
        ))}
      </ServiceRow>
    </Main>
    <SiteFooter />
  </Page>
);

export default function App() {
  return (
    <Desktop>
      <GlobalStyle />
      <Panel />
      <Body>
        <Launcher />
        <Browser>
          <BrowserChrome />
          <Viewport>
            <Site />
            <Scrollbar>
              <ScrollButton><svg width="5" height="3" viewBox="0 0 5 3"><path d="M0 3h5L2.500 0z" fill="#666" /></svg></ScrollButton>
              <Track><Thumb><Grip /><Grip /><Grip /></Thumb></Track>
              <ScrollButton><svg width="5" height="3" viewBox="0 0 5 3"><path d="M0 0h5L2.500 3z" fill="#666" /></svg></ScrollButton>
            </Scrollbar>
          </Viewport>
        </Browser>
      </Body>
    </Desktop>
  );
}
